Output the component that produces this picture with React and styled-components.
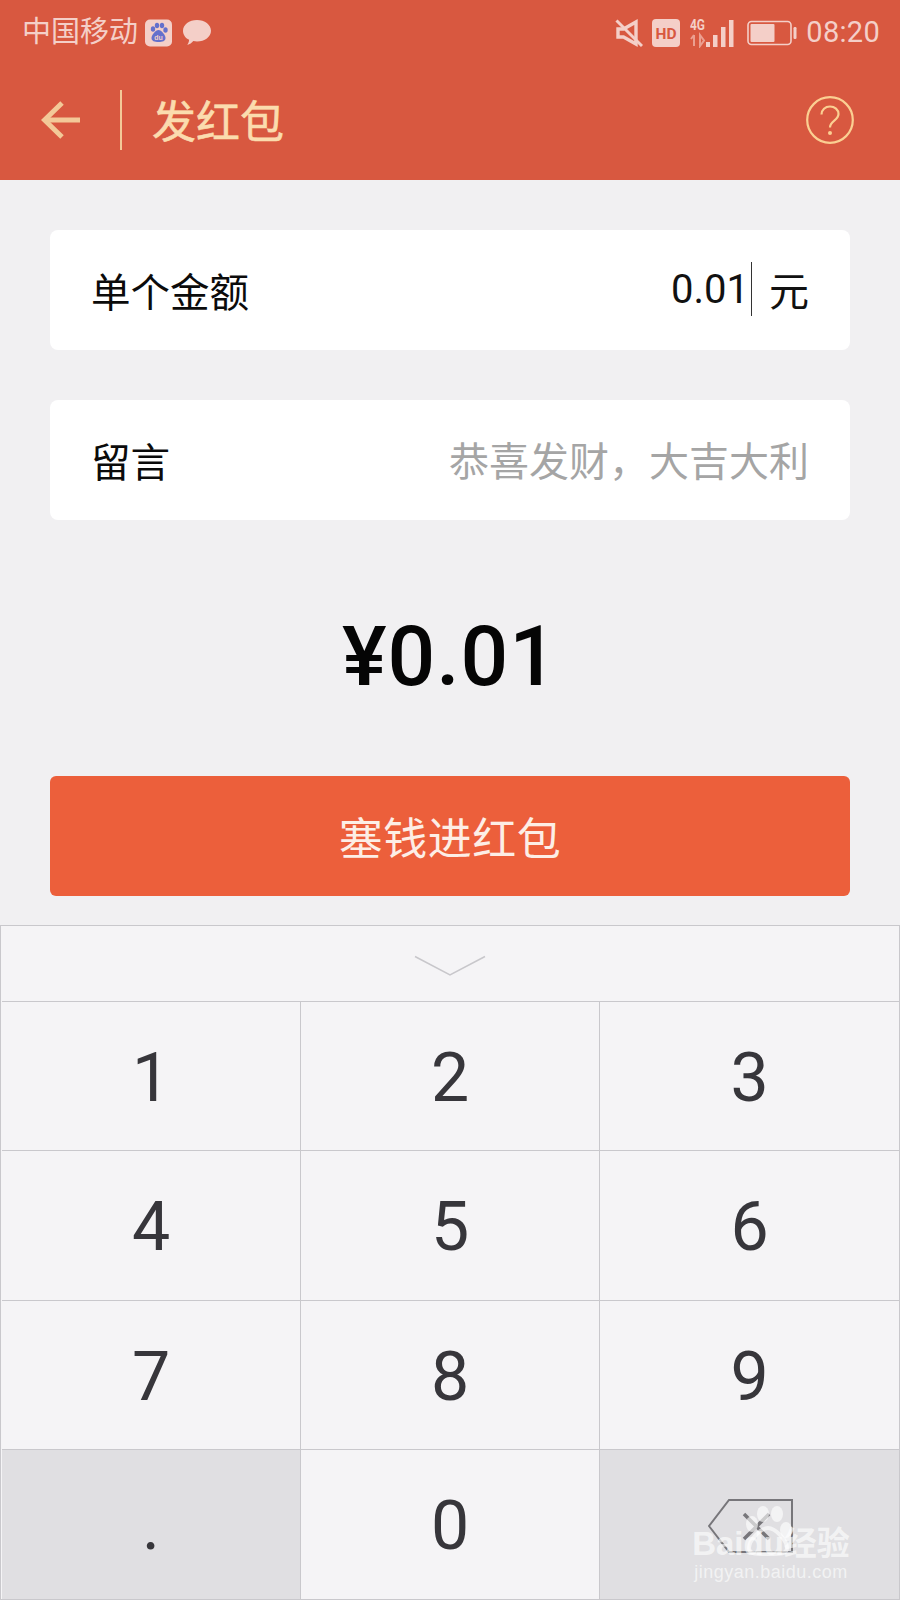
import React from 'react'
import styled, { createGlobalStyle } from 'styled-components'

const GlobalStyle = createGlobalStyle`
  html, body { margin: 0; padding: 0; background: #f1f0f2; }
  * { box-sizing: border-box; }
  body { font-family: Roboto, "Noto Sans CJK SC", sans-serif; }
`

const Page = styled.div`
  width: 900px;
  height: 1600px;
  overflow: hidden;
  position: relative;
  display: flex;
  flex-direction: column;
  background: #f1f0f2;
`

const Header = styled.header`
  height: 180px;
  background: #d85840;
  display: flex;
  flex-direction: column;
`

const StatusBar = styled.div`
  height: 60px;
  padding: 5px 20px 0 22px;
  display: flex;
  align-items: center;
  justify-content: space-between;
  color: #f4cfc8;
`

const StatusGroup = styled.div`
  display: flex;
  align-items: center;
`

const Carrier = styled.span`
  font-size: 29px;
  font-weight: 400;
  line-height: 55px;
  margin-right: 7px;
`

const Clock = styled.span`
  font-size: 29px;
  line-height: 55px;
  margin-left: 9px;
  letter-spacing: 0.3px;
`

const NavBar = styled.div`
  flex: 1;
  display: flex;
  align-items: center;
  padding: 0 46px 0 41px;
`

const NavDivider = styled.div`
  width: 2px;
  height: 60px;
  background: #f3c998;
  margin: 0 30px 0 39px;
`

const Title = styled.h1`
  margin: 0;
  flex: 1;
  font-size: 44px;
  font-weight: 400;
  line-height: 60px;
  color: #fbdcae;
  position: relative;
  top: 3px;
  -webkit-text-stroke: 0.6px #fbdcae;
`

const Content = styled.main`
  padding: 50px 50px 0;
  display: flex;
  flex-direction: column;
  height: 745px;
`

const Card = styled.div`
  height: 120px;
  margin-bottom: 50px;
  padding: 0 41px 2px;
  background: #fff;
  border-radius: 8px;
  display: flex;
  align-items: center;
  justify-content: space-between;
`

const Label = styled.span`
  font-size: 39.5px;
  color: #0b0b0b;
`

const ValueGroup = styled.div`
  display: flex;
  align-items: center;
`

const Value = styled.span`
  font-size: 40px;
  color: #111;
`

const Caret = styled.span`
  width: 1px;
  height: 54px;
  margin: 0 17px 0 2px;
  background: #333;
`

const Placeholder = styled.span`
  font-size: 40px;
  color: #a5a5a5;
`

const Amount = styled.div`
  height: 190px;
  margin-top: -9px;
  display: flex;
  align-items: center;
  justify-content: center;
  font-size: 84px;
  font-weight: 500;
  color: #050505;
  letter-spacing: 1px;
`

const PrimaryButton = styled.button`
  height: 120px;
  margin-top: 25px;
  border: 0;
  border-radius: 6px;
  background: #ec5f3b;
  color: #fdeee6;
  font-family: inherit;
  font-size: 44px;
  letter-spacing: 0.5px;
`

const Keypad = styled.section`
  flex: 1;
  position: relative;
  display: flex;
  flex-direction: column;
  background: #f5f4f6;
  border: 1px solid #c9c8cc;
`

const CollapseRow = styled.div`
  height: 75px;
  display: flex;
  align-items: flex-start;
  justify-content: center;
  padding-top: 29px;
`

const KeyGrid = styled.div`
  flex: 1;
  display: grid;
  grid-template-columns: 299px 299px 1fr;
  grid-template-rows: repeat(4, 1fr);
  border-top: 1px solid #c9c8cc;
  margin-left: 1px;
`

const Key = styled.div`
  display: flex;
  align-items: center;
  justify-content: center;
  padding-top: 4px;
  font-size: 68px;
  color: #37363b;
  background: ${(p) => (p.$dark ? '#e0dfe2' : '#f5f4f6')};
  border-bottom: ${(p) => (p.$last ? '0' : '1px solid #c9c8cc')};
  border-right: ${(p) => (p.$end ? '0' : '1px solid #c9c8cc')};
`

const Watermark = styled.div`
  position: absolute;
  right: 48px;
  bottom: 16px;
  width: 160px;
  color: rgba(255, 255, 255, 0.62);
  text-align: center;
  font-family: "Liberation Sans", "Noto Sans CJK SC", sans-serif;
`

const WatermarkBrand = styled.div`
  font-size: 33px;
  font-weight: 700;
  line-height: 34px;
  white-space: nowrap;
`

const WatermarkDomain = styled.div`
  font-size: 18px;
  line-height: 22px;
  letter-spacing: 0.5px;
  white-space: nowrap;
`

const WatermarkPaw = styled.svg`
  position: absolute;
  left: 50px;
  top: -40px;
`

const BaiduIcon = () => (
  <svg width="28" height="28" viewBox="0 0 28 28" style={{ marginRight: 9 }}>
    <rect width="27" height="27" y="0.5" rx="5" fill="#f4cfc8" />
    <g fill="#6470cc">
      <ellipse cx="8" cy="10" rx="2.2" ry="2.8" />
      <ellipse cx="12" cy="6.5" rx="2.2" ry="2.8" />
      <ellipse cx="17" cy="6.5" rx="2.2" ry="2.8" />
      <ellipse cx="20.5" cy="11" rx="2.2" ry="2.8" />
      <path d="M13.5 11c3 0 7 5 7 8s-3 4-7 4-7-1-7-4 4-8 7-8z" />
    </g>
    <text x="13.5" y="21" textAnchor="middle" fontSize="7" fontWeight="700" fill="#f4cfc8" fontFamily="Liberation Sans">du</text>
  </svg>
)

const ChatIcon = () => (
  <svg width="30" height="28" viewBox="0 0 30 28">
    <path d="M15 1c7.700 0 14 4.700 14 10.800S22.700 22.500 15 22.500c-1.300 0-2.500-.1-3.700-.4-1.500 1.900-3.600 3.300-6 3.900 1-1.500 1.700-3.200 1.800-5.200C3.300 19 1 15.700 1 11.800 1 5.700 7.300 1 15 1z" fill="#f4cfc8" />
  </svg>
)

const MuteIcon = () => (
  <svg width="28" height="30" viewBox="0 0 28 30" fill="none" stroke="#f4cfc8" strokeWidth="3.400" style={{ marginRight: 9 }}>
    <path d="M3 11h5.500L21 4v22L8.500 19H3z" />
    <path d="M1.500 2.500L27 28" strokeWidth="3" />
  </svg>
)

const HdIcon = () => (
  <svg width="28" height="28" viewBox="0 0 28 28" style={{ marginRight: 10 }}>
    <rect width="28" height="28" rx="4" fill="#f4cfc8" />
    <text x="14" y="20" textAnchor="middle" fontSize="15.500" fontWeight="700" fill="#d85840" fontFamily="Roboto">HD</text>
  </svg>
)

const SignalIcon = () => (
  <svg width="44" height="30" viewBox="0 0 44 30" style={{ marginRight: 13 }}>
    <text x="0" y="12" fontSize="14" fontWeight="700" fill="#f4cfc8" fontFamily="Roboto" textLength="15" lengthAdjust="spacingAndGlyphs">4G</text>
    <path d="M4 17v11M4 17l-3 4M10 28V17l4 5.500z" fill="none" stroke="#eb9f90" strokeWidth="2" />
    <rect x="16" y="24" width="4" height="5" fill="#f4cfc8" />
    <rect x="23" y="17" width="4.500" height="12" fill="#f4cfc8" />
    <rect x="31" y="9" width="4.500" height="20" fill="#f4cfc8" />
    <rect x="39" y="2" width="4.500" height="27" fill="#f4cfc8" />
  </svg>
)

const BatteryIcon = () => (
  <svg width="50" height="26" viewBox="0 0 50 26">
    <rect x="1" y="1.500" width="43" height="23" rx="3.500" fill="none" stroke="#f4cfc8" strokeWidth="1.600" />
    <rect x="3.500" y="4" width="24" height="18" rx="1" fill="#f4cfc8" />
    <rect x="46.500" y="7" width="3" height="12" rx="1.200" fill="#f4cfc8" />
  </svg>
)

const BackIcon = () => (
  <svg width="40" height="38" viewBox="0 0 40 38" fill="none" stroke="#f3c998" strokeWidth="5">
    <path d="M39 19H4" />
    <path d="M21 2L3.500 19 21 36" />
  </svg>
)

const HelpIcon = () => (
  <svg width="48" height="48" viewBox="0 0 48 48" fill="none" stroke="#fbcf92" strokeWidth="2.200">
    <circle cx="24" cy="24" r="22.800" />
    <path d="M15.500 18.500c0-4.800 3.800-8 8.500-8s8.500 3.200 8.500 7.600c0 6.400-8.500 6.800-8.500 13.400" />
    <circle cx="24" cy="37" r="2" fill="#fbcf92" stroke="none" />
  </svg>
)

const ChevronIcon = () => (
  <svg width="72" height="22" viewBox="0 0 72 22" fill="none" stroke="#c8c7cb" strokeWidth="1.500">
    <path d="M1 1.500L36 20 71 1.500" />
  </svg>
)

const BackspaceIcon = () => (
  <svg width="86" height="56" viewBox="0 0 86 56" fill="none" stroke="#77767a" strokeWidth="2" style={{ position: 'relative', top: 1, left: 1 }}>
    <path d="M21 1h63v52H21L1 27z" />
    <path d="M36 15l25 25M61 15L36 40" strokeWidth="3.500" />
  </svg>
)

const KEYS = ['1', '2', '3', '4', '5', '6', '7', '8', '9']

function App() {
  return (
    <Page>
      <GlobalStyle />
      <Header>
        <StatusBar>
          <StatusGroup>
            <Carrier>中国移动</Carrier>
            <BaiduIcon />
            <ChatIcon />
          </StatusGroup>
          <StatusGroup>
            <MuteIcon />
            <HdIcon />
            <SignalIcon />
            <BatteryIcon />
            <Clock>08:20</Clock>
          </StatusGroup>
        </StatusBar>
        <NavBar>
          <BackIcon />
          <NavDivider />
          <Title>发红包</Title>
          <HelpIcon />
        </NavBar>
      </Header>

      <Content>
        <Card>
          <Label>单个金额</Label>
          <ValueGroup>
            <Value>0.01</Value>
            <Caret />
            <Value>元</Value>
          </ValueGroup>
        </Card>
        <Card>
          <Label>留言</Label>
          <Placeholder>恭喜发财，大吉大利</Placeholder>
        </Card>
        <Amount>¥0.01</Amount>
        <PrimaryButton>塞钱进红包</PrimaryButton>
      </Content>

      <Keypad>
        <CollapseRow>
          <ChevronIcon />
        </CollapseRow>
        <KeyGrid>
          {KEYS.map((k, i) => (
            <Key key={k} $end={i % 3 === 2}>{k}</Key>
          ))}
          <Key $dark $last>.</Key>
          <Key $last>0</Key>
          <Key $dark $last $end><BackspaceIcon /></Key>
        </KeyGrid>
        <Watermark>
          <WatermarkPaw width="70" height="76" viewBox="0 0 70 76" fill="rgba(255,255,255,0.62)">
            <ellipse cx="11" cy="37" rx="6" ry="8" />
            <ellipse cx="22" cy="27" rx="6" ry="8" />
            <ellipse cx="36" cy="27" rx="6" ry="8" />
            <ellipse cx="45" cy="43" rx="6" ry="8" />
            <path d="M27 41c7 0 19 12 19 20 0 6-6 6-19 6S8 67 8 61c0-8 12-20 19-20z" fill="none" stroke="rgba(255,255,255,0.62)" strokeWidth="4" />
          </WatermarkPaw>
          <WatermarkBrand>Baidu经验</WatermarkBrand>
          <WatermarkDomain>jingyan.baidu.com</WatermarkDomain>
        </Watermark>
      </Keypad>
    </Page>
  )
}

export default App
